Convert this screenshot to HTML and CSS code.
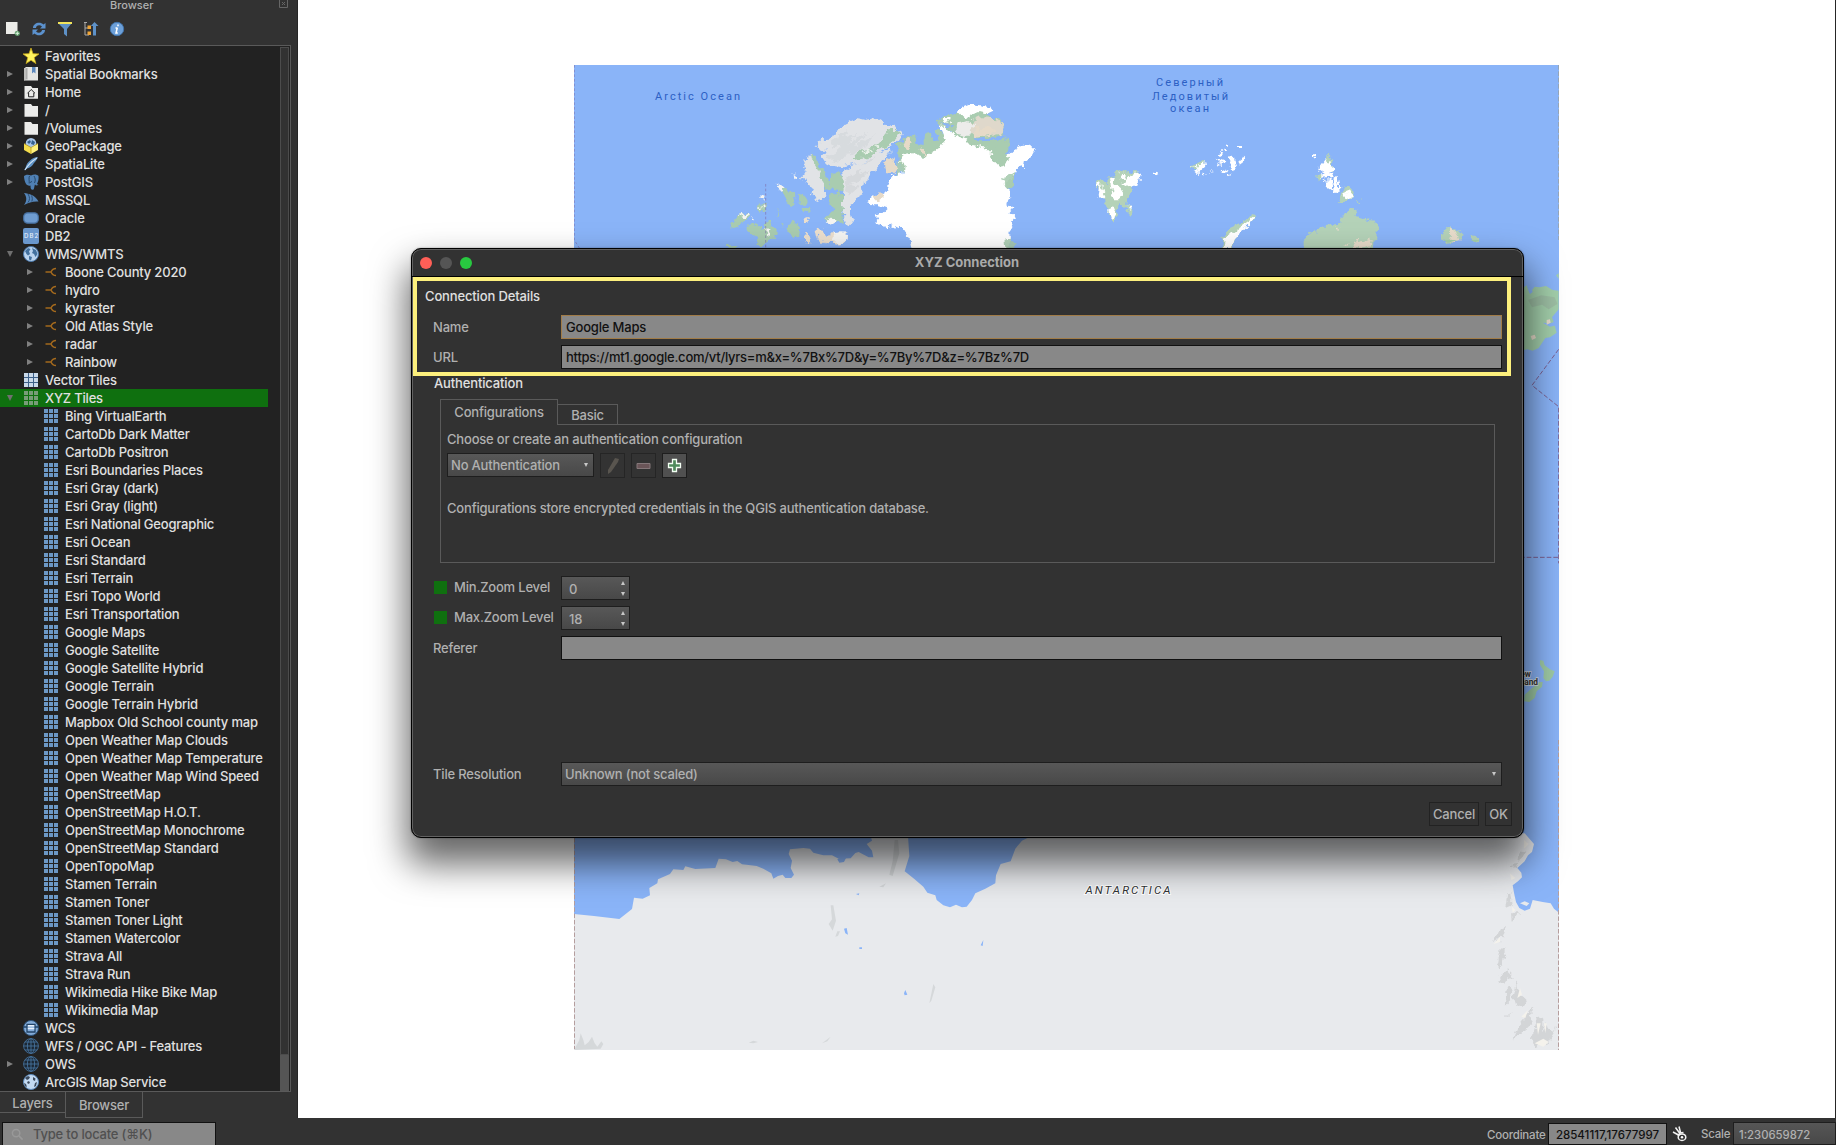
FILE: index.html
```html
<!DOCTYPE html>
<html lang="en">
<head>
<meta charset="utf-8">
<title>XYZ Connection</title>
<link rel="stylesheet" href="styles.css">
</head>
<body>
<svg class="defs" width="0" height="0" aria-hidden="true">
  <filter id="coast" x="0" y="0" width="1" height="1" color-interpolation-filters="sRGB"><feTurbulence type="fractalNoise" baseFrequency=".05" numOctaves="3" seed="4"/><feDisplacementMap in="SourceGraphic" scale="26" xChannelSelector="R" yChannelSelector="G"/></filter>
  <symbol id="star" viewBox="0 0 16 16"><path d="M8 0l2 5.7 6 .2-4.800 3.700 1.700 6L8 12.200 3.100 15.600l1.700-6L0 5.900l6-.2z" fill="#fff45e" stroke="#c9a91b" stroke-width=".8"/></symbol>
  <symbol id="book" viewBox="0 0 16 16"><path d="M1 2.500 3 1h12v13.500H1z" fill="#e4e4e2"/><path d="M1 2.500 4 2v11l-3 1.500z" fill="#bdbdbb"/><path d="M4 2v11.500" stroke="#888" stroke-width=".6"/><path d="M9 1h3.500v6.500L10.700 6 9 7.500z" fill="#5d88bd"/></symbol>
  <symbol id="folder" viewBox="0 0 16 16"><path d="M1.500 2H8l1.500 2H15v10.800H1.500z" fill="#ececea"/></symbol>
  <symbol id="home" viewBox="0 0 16 16"><path d="M1.500 2H8l1.500 2H15v10.800H1.500z" fill="#ececea"/><path d="M4.500 9.300 8.200 5.500 12 9.300M5.600 8.800v4h5.200v-4" fill="none" stroke="#222" stroke-width="1"/></symbol>
  <symbol id="gpkg" viewBox="0 0 16 16"><circle cx="8" cy="5.300" r="5.300" fill="#a9c6e8"/><path d="M4 4l3-2 1 2-2 2zM9 2l3 2-1 3-3-1z" fill="#35608f"/><path d="M1 5.500l7 4V16l-7-4z" fill="#f4dd4c"/><path d="M15 5.500 8 9.500V16l7-4z" fill="#fff07a"/><path d="M1 5.500l7 4 7-4M8 9.500V16" fill="none" stroke="#a98d1a" stroke-width=".7"/></symbol>
  <symbol id="feather" viewBox="0 0 16 16"><path d="M15 1C9 1.500 4 6 2.600 11.500L1 14.500l3-2C9 11.500 10 8 11 7c2-2 3-4 4-6z" fill="#5f93c6"/><path d="M14 2C9 5 5 9 2 14" stroke="#cfe2f3" fill="none" stroke-width="1.100"/></symbol>
  <symbol id="pg" viewBox="0 0 16 16"><path d="M1 2c3-2 5-1 7-.5C11 0 14 .5 15.500 2c.5 3-.5 6-1.500 8l1.500 1-2.500.5-1-1c-1 2-.5 5-2 5.300-2 .2-2.500-1-2.500-4.300-1 .5-2 .3-2.300-.3C3 12 1 6 1 2z" fill="#4f80b4"/><path d="M6.500 2c-1 2 0 5-.3 7.500M11 2c1 2 2 4 .5 7M7 8c1 1 1.500 0 1.500-1" fill="none" stroke="#23415f" stroke-width=".9"/></symbol>
  <symbol id="mssql" viewBox="0 0 16 16"><path d="M1 1c5 .5 11 2 14.500 8.500C10 9 6 10.500 1 13 4 9 4 5 1 1z" fill="#5585b8"/><path d="M5 2c2 3 2 6 0 8.500M8.500 3.500c1 2 1 4 .3 6" stroke="#2a4d73" fill="none"/></symbol>
  <symbol id="oracle" viewBox="0 0 16 16"><rect x=".7" y="2.800" width="14.600" height="10.400" rx="4" fill="#6f9cd0" stroke="#466f9f" stroke-width="1.200"/></symbol>
  <symbol id="globe" viewBox="0 0 16 16"><circle cx="8" cy="8" r="7.500" fill="#b9d3ef" stroke="#4b78ab"/><path d="M2 5l3-3 2.500 1L6 5.500 7 8l-2 1.500L3.500 8zM9 2l4 2 1.500 4-2 3-1.500-3-2-1 1-2zM6 10l3 1-1 3.500-2-1z" fill="#43719f"/></symbol>
  <symbol id="arc" viewBox="0 0 16 16"><circle cx="8" cy="8" r="7.500" fill="#c3daf2" stroke="#5d8abb"/><path d="M2 4l3-2 2 1-1 2-2 1zM10 3l2.500 1.500L12 7l-2-1zM5 7l2 1-1 2-2-1zM1 9l2 1 1 3-2-1zM12 9l2-1-1 4-2 1z" fill="#3c4a5c"/></symbol>
  <symbol id="wcs" viewBox="0 0 16 16"><circle cx="8" cy="8" r="7.500" fill="#83abd8" stroke="#2d5279"/><path d="M0 7h4V4.500h8V7h4M4 7v5h8V7" fill="none" stroke="#234468" stroke-width="1.300"/><path d="M4.800 5.700h6.500M4.800 8.500h6.500" stroke="#e6f0fb" stroke-width="1.500"/></symbol>
  <symbol id="wire" viewBox="0 0 16 16"><g fill="none" stroke="#4a78a6" stroke-width=".8"><circle cx="8" cy="8" r="7.400" fill="#1c2835"/><ellipse cx="8" cy="8" rx="3.600" ry="7.400"/><path d="M.6 8h14.800M8 .6v14.800M2 4h12M2 12h12"/></g></symbol>
  <symbol id="conn" viewBox="0 0 16 16"><path d="M2.500 8H8m5-3.600c-3 0-4.200 1.600-5 3.600.8 2 2 3.600 5 3.600" fill="none" stroke="#a3691d" stroke-width="1.500"/></symbol>
  <symbol id="grid" viewBox="0 0 16 16"><path d="M1 1h4v4H1zm5 0h4v4H6zm5 0h4v4h-4zM1 6h4v4H1zm5 0h4v4H6zm5 0h4v4h-4zM1 11h4v4H1zm5 0h4v4H6zm5 0h4v4h-4z" fill="currentColor"/></symbol>
</svg>

<div class="app">
<div class="workspace">
<aside class="dock">
  <header class="dock-title">Browser<svg class="float" viewBox="0 0 9 9"><path d="M.5.500h8v8h-8zM3 3l3 3M6 3 3 6" fill="none" stroke="#666"/></svg></header>
  <div class="tools">
    <svg viewBox="0 0 16 16"><path d="M1 1h11.500v12H1z" fill="#ecece8"/><circle cx="12.300" cy="12.300" r="2.600" fill="#5f9a6a"/><path d="M12.300 10.500v3.600M10.500 12.300h3.600" stroke="#d9f2dd"/></svg>
    <svg viewBox="0 0 16 16"><path d="M2 7c0-5 7-7 10.500-3.500L14.500 2v5.500H9l2-2C8 3 5 5 5 7zM14 9c0 5-7 7-10.500 3.500L1.500 14V8.500H7l-2 2C8 13 11 11 11 9z" fill="#5b91cd"/></svg>
    <svg viewBox="0 0 16 16"><path d="M1.500 2.500h13L10 8v7.500L7 13V8z" fill="#5e91c7"/><path d="M1 1h14v2H1z" fill="#f2e45c"/></svg>
    <svg viewBox="0 0 16 16"><path d="M1 1.500h3M2 2v12h4M2 7h4" stroke="#aaa" fill="none"/><path d="M4.500 4.500H8V8H4.500zm0 6H8V14H4.500z" fill="#f0a638"/><path d="M11.500 1l4 4h-2.500v9.500h-3V5H7.800z" fill="#5e91c7"/></svg>
    <svg viewBox="0 0 16 16"><circle cx="8" cy="8" r="6.700" fill="#6c9fd8" stroke="#4174ac"/><path d="M9 3.500v1.800M8.300 6.800 7 12h1.800M6.500 7h2" stroke="#fff" stroke-width="1.500" fill="none"/></svg>
  </div>
  <div class="tree-frame">
  <ul class="tree">
    <li><i></i><svg><use href="#star"/></svg>Favorites</li>
    <li><i class="r"></i><svg><use href="#book"/></svg>Spatial Bookmarks</li>
    <li><i class="r"></i><svg><use href="#home"/></svg>Home</li>
    <li><i class="r"></i><svg><use href="#folder"/></svg>/</li>
    <li><i class="r"></i><svg><use href="#folder"/></svg>/Volumes</li>
    <li><i class="r"></i><svg><use href="#gpkg"/></svg>GeoPackage</li>
    <li><i class="r"></i><svg><use href="#feather"/></svg>SpatiaLite</li>
    <li><i class="r"></i><svg><use href="#pg"/></svg>PostGIS</li>
    <li><i></i><svg><use href="#mssql"/></svg>MSSQL</li>
    <li><i></i><svg><use href="#oracle"/></svg>Oracle</li>
    <li><i></i><svg viewBox="0 0 16 16"><rect width="16" height="16" rx="2" fill="#6a97cd"/><text x="8" y="10" text-anchor="middle" font-size="6" fill="#e8f0fa" textLength="14">DB2</text></svg>DB2</li>
    <li><i class="d"></i><svg><use href="#globe"/></svg>WMS/WMTS</li>
    <li class="sub"><i class="r"></i><svg><use href="#conn"/></svg>Boone County 2020</li>
    <li class="sub"><i class="r"></i><svg><use href="#conn"/></svg>hydro</li>
    <li class="sub"><i class="r"></i><svg><use href="#conn"/></svg>kyraster</li>
    <li class="sub"><i class="r"></i><svg><use href="#conn"/></svg>Old Atlas Style</li>
    <li class="sub"><i class="r"></i><svg><use href="#conn"/></svg>radar</li>
    <li class="sub"><i class="r"></i><svg><use href="#conn"/></svg>Rainbow</li>
    <li class="vector"><i></i><svg><use href="#grid"/></svg>Vector Tiles</li>
    <li class="selected"><i class="d"></i><svg><use href="#grid"/></svg>XYZ Tiles</li>
    <li class="sub"><i></i><svg><use href="#grid"/></svg>Bing VirtualEarth</li>
    <li class="sub"><i></i><svg><use href="#grid"/></svg>CartoDb Dark Matter</li>
    <li class="sub"><i></i><svg><use href="#grid"/></svg>CartoDb Positron</li>
    <li class="sub"><i></i><svg><use href="#grid"/></svg>Esri Boundaries Places</li>
    <li class="sub"><i></i><svg><use href="#grid"/></svg>Esri Gray (dark)</li>
    <li class="sub"><i></i><svg><use href="#grid"/></svg>Esri Gray (light)</li>
    <li class="sub"><i></i><svg><use href="#grid"/></svg>Esri National Geographic</li>
    <li class="sub"><i></i><svg><use href="#grid"/></svg>Esri Ocean</li>
    <li class="sub"><i></i><svg><use href="#grid"/></svg>Esri Standard</li>
    <li class="sub"><i></i><svg><use href="#grid"/></svg>Esri Terrain</li>
    <li class="sub"><i></i><svg><use href="#grid"/></svg>Esri Topo World</li>
    <li class="sub"><i></i><svg><use href="#grid"/></svg>Esri Transportation</li>
    <li class="sub"><i></i><svg><use href="#grid"/></svg>Google Maps</li>
    <li class="sub"><i></i><svg><use href="#grid"/></svg>Google Satellite</li>
    <li class="sub"><i></i><svg><use href="#grid"/></svg>Google Satellite Hybrid</li>
    <li class="sub"><i></i><svg><use href="#grid"/></svg>Google Terrain</li>
    <li class="sub"><i></i><svg><use href="#grid"/></svg>Google Terrain Hybrid</li>
    <li class="sub"><i></i><svg><use href="#grid"/></svg>Mapbox Old School county map</li>
    <li class="sub"><i></i><svg><use href="#grid"/></svg>Open Weather Map Clouds</li>
    <li class="sub"><i></i><svg><use href="#grid"/></svg>Open Weather Map Temperature</li>
    <li class="sub"><i></i><svg><use href="#grid"/></svg>Open Weather Map Wind Speed</li>
    <li class="sub"><i></i><svg><use href="#grid"/></svg>OpenStreetMap</li>
    <li class="sub"><i></i><svg><use href="#grid"/></svg>OpenStreetMap H.O.T.</li>
    <li class="sub"><i></i><svg><use href="#grid"/></svg>OpenStreetMap Monochrome</li>
    <li class="sub"><i></i><svg><use href="#grid"/></svg>OpenStreetMap Standard</li>
    <li class="sub"><i></i><svg><use href="#grid"/></svg>OpenTopoMap</li>
    <li class="sub"><i></i><svg><use href="#grid"/></svg>Stamen Terrain</li>
    <li class="sub"><i></i><svg><use href="#grid"/></svg>Stamen Toner</li>
    <li class="sub"><i></i><svg><use href="#grid"/></svg>Stamen Toner Light</li>
    <li class="sub"><i></i><svg><use href="#grid"/></svg>Stamen Watercolor</li>
    <li class="sub"><i></i><svg><use href="#grid"/></svg>Strava All</li>
    <li class="sub"><i></i><svg><use href="#grid"/></svg>Strava Run</li>
    <li class="sub"><i></i><svg><use href="#grid"/></svg>Wikimedia Hike Bike Map</li>
    <li class="sub"><i></i><svg><use href="#grid"/></svg>Wikimedia Map</li>
    <li><i></i><svg><use href="#wcs"/></svg>WCS</li>
    <li><i></i><svg><use href="#wire"/></svg>WFS / OGC API - Features</li>
    <li><i class="r"></i><svg><use href="#wire"/></svg>OWS</li>
    <li><i></i><svg><use href="#arc"/></svg>ArcGIS Map Service</li>
  </ul>
  <div class="scrollbar"><div class="thumb"></div></div>
  </div>
  <nav class="dock-tabs"><span class="layers">Layers</span><span class="browser">Browser</span></nav>
</aside>

<main class="canvas">
<svg class="map" viewBox="574 65 985 985" width="985" height="985">
  <rect x="574" y="65" width="985" height="985" fill="#8ab4f8"/>
  <!-- Greenland and the Canadian arctic -->
  <g transform="translate(570 60) scale(.33333)">
    <g filter="url(#coast)">
    <path fill="#e1e3e6" d="M736 258l20-20 22-2 8-14 20-6 10-18 14-2 8-14 20-8 14 2 16 4 30-6 16 8 10 12 20 2 16 12 18 12-14 22-30 20-40 26-40 22-26 6-28 6-30-4-24-12-10-14 16-16-20-8z"/>
    <path fill="#cdd0d4" d="M800 230l30-20-8 24 40-16-30 34 60-34-40 44 66-44-50 56-36 8-34 20-8-20 30-28-40 10zM770 290l30-14 10 20-20 10z" opacity=".45"/>
    <path fill="#a9ccb0" d="M845 300l20-26 40-10 26-24 20-14 10-18 20-2 8 16-14 18-26 20-34 14-20 20-30 4z"/>
    <path fill="#e8f0e8" d="M880 274l24-8-4 10-18 6zM914 258l18-8-6 12z"/>
    <path fill="#e1e3e6" d="M720 284l16 18 8 20 12 20 6 30 0 30-6 20-14 4-10-20-10-8 4-16-18-10-12-24 14-6-12-18 10-8-8-16 16-6z"/>
    <path fill="#a9ccb0" d="M722 280l16 14 8 26 20 14 6 24 16 20-6 14-16-6-12-34-14-28-14-24zM784 338l24-2 16 20 2 30-12 10-24-2-8-20zM776 404l30-6 14 10-2 60 0 20-28 0-22-12 14-18 8-16-14-14z"/>
    <path fill="#e1e3e6" d="M816 332l40-18 30-10 30-20 46-16-8 20-20 18-6 16-26 14-4 18-22 18-4 10 4 20-18 10-4 20-14 8 0 26 12 10-6 10-8 10-14-4 -2-30-4-20 6-60z"/>
    <path fill="#caccd0" d="M836 350l40-24-10 20 36-22-36 38-26 14 30 4-36 28-4-14zM880 310l36-18-10 18z" opacity=".45"/>
    <path fill="#a9ccb0" d="M636 388l20-4 16 20 4 20-12 14-14-8-8-22zM684 402l16 2 10 18-12 16-12-12zM566 434l18-6 4 20-16 10-8-10zM484 494l20-26 28-12 12 12-20 18-20 14-20 6zM532 496l14-6 20 10 20 6 4-26 10 0 6 24 18 10-6 20-26 6-18 16-20-6 14-12-20-12-14-14zM654 492l22-6 14 14-2 24-16 8-8-10-12-4zM470 564l8-8 20 0 14 8zM622 444l8 20-4 4zM700 444l18 0 4 10-18 2zM634 488l8 4-4 8z"/>
    <path fill="#f4f4f2" d="M624 378l12-2 8 8-8 8-10-4zM564 414l10-10 16 4-4 10-18 2zM562 440l20-4-4 10zM508 466l26-8 8 6-14 10zM668 340l8 2 2 12-8 4zM590 500l8 8 0 14-10 8zM546 472l10 4-4 6z"/>
    <path fill="#ecdfcd" d="M702 528l14-4 6 16-8 8-12-4zM734 508l24 4 12 12 24-2 14-8 22 4 4 16-10 16-20 4-16-4-20 4-12-14-16-2zM700 472l14 0 6 18-12 6z"/>
    <path fill="#f4f4f2" d="M790 516l30-2 14 8-2 20-16 10-26-6 6-16zM770 482l20-12 10 12-14 10z"/>
    <path fill="#a9ccb0" d="M984 250L1020 228 1034 226 1040 250 1064 252 1064 218 1078 214 1090 246 1104 246 1094 208 1108 206 1130 232 1144 218 1110 198 1096 184 1126 168 1160 160 1195 135 1240 140 1266 150 1250 165 1285 175 1304 205 1296 226 1316 238 1312 280 1330 290 1332 380 1290 400 1200 300 1100 290 1004 345 985 290z"/>
    <path fill="#8ab4f8" d="M1042 226l20 22-4-34zM1080 214l14 24-2-30zM1214 232l60 0 20-6 14 8-30 8-60 2zM1110 190l40 6-20 6z"/>
    <path fill="#fff" d="M1160 152l20-12 20-8 26 4 34 6 10 10-16 8-30-4-24 10-20 8-14-14zM1118 174l18 0 4 12-14 6z"/>
    <path fill="#dfd8cb" d="M1204 186l30-14 40 2 20 14 10 18-10 16-40 4-34 4-20-16z"/>
    <path fill="#ececea" d="M1164 190l30-10 20 10-10 30-16 8-34-10z"/>
    <path fill="#fff" d="M1000 284L1030 280 1060 290 1090 276 1110 262 1128 240 1112 200 1126 200 1150 228 1165 232 1185 232 1200 250 1220 262 1240 258 1262 280 1270 300 1290 320 1310 316 1318 296 1310 290 1330 270 1345 262 1355 254 1380 254 1396 270 1385 290 1368 304 1365 320 1340 324 1335 336 1320 345 1328 352 1310 366 1316 382 1320 400 1312 430 1330 445 1318 460 1336 470 1325 484 1330 500 1315 520 1328 540 1310 575 1028 575 1022 540 1010 515 990 506 970 496 945 502 925 492 920 476 908 464 935 458 950 444 925 436 905 436 892 424 905 412 935 405 955 392 955 370 965 345 1000 342 1004 315 990 300z"/>
    <path fill="#e6dac8" d="M1000 246l14-12 12 10-8 18-14 4zM1048 268l18 4 10 14-24-8zM906 412l28-12 8 6-22 18zM942 312l14-18 22 10 8 26-14 10-26-4zM1212 196l20 4-6 18 30-20 20 12-14 14-46 4z"/>
    <path fill="#a9ccb0" d="M986 300l14 28-6 18-14-4zM1264 286l20-30 24-14 8 24-20 40-14 4zM1296 350l24-6 12 20-6 24-14 0zM1304 540l20-10 10 20-4 14-24 0z" opacity=".9"/>
    </g>
    <path d="M587 372v190M13 15v525l15 24" fill="none" stroke="#7d6aa5" stroke-width="2.500" stroke-dasharray="8 6" opacity=".7"/>
  </g>
  <!-- Svalbard, Franz Josef Land and the Siberian coast -->
  <g transform="translate(1060 60) scale(.33333)">
    <g filter="url(#coast)">
    <path fill="#b4d2b8" d="M108 364l12-8 16 14 12-18 14-4 10-12 16-4 18 6 22-2 10 4-20 30-14 40-6 20 16 14 0 20-10-4-8-16-20-16-4 30-10 26-8-2-10-20 6-14-18-14 8-12-14-14-6-18zM392 318l20-14 20 2-10 30-16-6zM796 296l10-12 14 22-4 30-30 0zM768 346l20 2 0 12-14 2zM836 430l12-34 6-18 26 16 2 14-20 16zM890 420l14 6-10 6zM728 540l16-16 50-26 36-6 22-20 14-24 12-4 12 12-4 14 24 6 16 4 18 2 10 20-2 30-12 14 0 30-212 0zM1146 520l10-16 24 6 14 4 14 10-6 12-20 8-24 6-12-12zM1222 526l20 2 14 10-4 8-20-4zM480 575l8-40 20-30 30-14 40-26 6 4-4 14-40 30-30 50z"/>
    <path fill="#fff" d="M110 366l8 2 4 12 8 8 6 24-8 8-12-14 4-24-10-8zM150 354l12-2 2 16 18 16 10 16-16 18-14 0-6-20zM176 342l16-4 6 18-18 2zM190 370l20-24 22-8 12 8-8 20-24 16zM144 452l20-14 4 8-10 36-8-4zM202 438l14-2 0 12-8 4zM278 336l12-4 4 6-12 6zM392 318l24-6-6 8zM404 338l18-26 18-2-20 28zM464 292l32 12-8 8zM474 308l16 4-10 6zM494 252h12v6h-12zM486 270l10-4 2 8-8 2zM476 284l8-8 6 6-10 6zM534 258h10v6h-10zM514 292l8-2 4 20 4 12-14 6-10-8 4-12zM536 304l18-14 2 14-16 12zM480 334l18-10 4 8-16 10zM450 334l8-4 2 8zM430 344l8-2 2 8zM504 344h8v6h-8zM762 286h9v9h-9zM780 318l14-20 20 4 6 30-24 10-18-12zM784 342l36-4 4 14-40 4zM796 362l20-4 4 30-14 4-12-16zM824 354l12-6 6 46-20 6zM850 400l16-6 16 16-14 4-10 4zM484 575l8-39 40-28 44-32 4 6-40 36-40 52z"/>
    <path fill="#e8dccb" d="M1170 540l6-34 10 10 16 24-20 6zM880 550l20-10 20 4 16-6-4 16-20 8-30 0zM846 550l20 2-4 6zM826 500l12 6-6 6z"/>
    </g>
    <path d="M1496 15v525" stroke="#97a3ad" stroke-width="3" stroke-dasharray="14 5"/>
  </g>
  <!-- Far east coast and the date line -->
  <g transform="translate(1380 240) scale(.33333)">
    <path fill="#a3cfab" d="M420 150l20-14 8 24 16-20 14 2 20-4 20 12 18 2v56l-20 24 6 16 8 30-20 14-14 2-20 30-18 8-16-4-22 4zM528 106l8-6v16zM190 0l14 8 30-8zM272 0l14 6 14-6z"/>
    <path fill="#9dbfa4" d="M444 180l40-14 40 6 8 20-26 16-20-14-30 8z"/>
    <path fill="#8ab4f8" d="M442 138l10-2 6 20-8 6zM488 248l24 2 24-10v14l-26 6z"/>
    <path fill="#e8dccb" d="M500 240l10-2 2 10-12 6zM452 288l12-4 4 10-12 6z"/>
    <path d="M536 328l-80 108 80 64v470M420 952h114" fill="none" stroke="#7b6090" stroke-width="3" stroke-dasharray="14 6"/>
  </g>
  <!-- New Zealand -->
  <g transform="translate(1510 640) scale(.33333)">
    <path fill="#9fcba6" d="M90 60l10 2 4 14 16 12 14 6-6 16-10 12-10 2-8-10 2-20-12-20zM88 126l10 0-2 14-16 14-6 20-16 12-16-2 2-20 20-18z"/>
    <g font-family="Roboto, sans-serif" font-weight="700" font-size="25" text-anchor="end" fill="#333" stroke="#dce6ee" stroke-width="4" paint-order="stroke"><text x="63" y="111">New</text><text x="84" y="136">Zealand</text></g>
  </g>
  <!-- Antarctica -->
  <g transform="translate(560 820) scale(.33333)">
    <path fill="#e8eaed" d="M42 282l60 6 76 9 20-16 18-14 6-34 26 3 22-10-2-22 24-14 2-12 36-16 10-14 30 2 6-11 30 8 60-3 10-28 22 2 20 8 14-3 14 10 20 2 24 3 20 8 24 14 6 16 14-8 14-4 8 10 18 0 8-10-10-20 4-22-10-20 4-14 40-4 20 2 10 12 30 8 26 0 20 10 36-1 14-16 10-3 30 16 14 0-4-20-16-20 16-10-4-14 112 0 4 60-14 46 30 24 26 22 12 18 24 8 4 14 20 16 20 6 18-8 18 8 14-2 16-20 10-20 30-14 30-16 2-24 14-34 30-8 14-38 20-24 40-20H2840V690H42z"/>
    <path fill="#8ab4f8" d="M832 118l16-8 6-10 6 10-8 16-14 2zM852 326l8-2 4 20-8-4zM1262 376l8-16-2 18zM1032 520l4-10 6 14-8 2zM888 222l10-2-2 6zM898 382h8v5h-8z"/>
    <g fill="#d5d8da"><path d="M812 256l8 0 8 46-10 30-12-20 10-14zM832 334l8 0-6 14-8 2zM1004 60l10 0 4 40-20 68-10-4 10-40zM958 200l20-10-8 12zM1120 492l6 10-12 40-6 8zM786 670l26-20-10 14zM566 668l14-6 14 4-14 4zM42 690l16-30 4-20 8 20 4 16 12-10 10-16 8 20 8 10 12-16 6 8-8 14z"/></g>
  </g>
  <g transform="translate(1360 740) scale(.33333)">
    <path fill="#e8eaed" d="M390 280H494L522 312 516 336 504 346 494 364 472 384 484 398 486 412 474 424 458 436 462 458 468 486 478 504 494 512 510 506 518 480 548 486 572 490 582 506 597 518V930H390z"/>
    <path fill="#e8eaed" d="M480 490l14-6 14 6-8 8z"/>
    <g fill="#d3d5d7" filter="url(#coast)"><path d="M476 342l20-14-4 20-20 16zM458 374l16-2-8 18zM442 460l12-2 4 36-22 10zM450 520l30 0-14 20-14 2zM410 590l10-24 18-8-10 30-20 16-14 12zM416 640l20-20-6 40-14 30-6-14zM426 700l12-12 24 24-24 12-20 6zM440 744l14-4 0 40-20 20zM470 730l8 30 22 20-10 14-24 0-6-20zM434 830l22-14-14 14zM458 900l16-40 26-30 20-30-4 30-10 30-24 20zM520 880l14-54 16 16 0 40-20 40-14-16zM540 900l20-50 16 24 14-10-30 50z"/></g>
    <g fill="#f4f2ec"><path d="M492 300l14 12-14 14zM450 400l16 14-12 6zM456 500l10 10-8 8zM400 612l20-20 0 14zM480 744l6 20-14 10zM484 830l20-20-8 24zM530 850l12 0-8 34zM552 850l8 0-4 30zM524 910l26-14 16 10-16 14z"/></g>
  </g>
  <path d="M574.500 838v211M1558.500 740v310" stroke="#b59e9e" stroke-width="1" stroke-dasharray="4.500 1.800"/>
  <g class="sea" text-anchor="middle">
    <text x="697.500" y="100.300" textLength="85">Arctic Ocean</text>
    <text x="1189.500" y="86" textLength="67">Северный</text>
    <text x="1190" y="100" textLength="76">Ледовитый</text>
    <text x="1189.500" y="112.200" textLength="39">океан</text>
  </g>
  <text class="land" x="1128" y="894.300" text-anchor="middle" textLength="85">ANTARCTICA</text>
</svg>
</main>
</div>

<footer class="status">
  <div class="locator"><svg viewBox="0 0 14 14"><circle cx="5.500" cy="5.500" r="4" fill="none" stroke="#999" stroke-width="1.600"/><path d="M8.500 8.500l4 4" stroke="#999" stroke-width="1.800"/></svg>Type to locate (⌘K)</div>
  <span class="coord-label">Coordinate</span>
  <div class="coord">28541117,17677997</div>
  <svg class="mouse" viewBox="0 0 16 16"><g fill="none" stroke="#f2f2f2" stroke-width="1.500"><path d="M3.500 1.500l4 5.500M7 .5l1.500 6M1 6l5.500 3M6 10l2-3 3.500-.5"/><ellipse cx="10" cy="11.200" rx="3.800" ry="3.300"/></g><circle cx="10" cy="11.200" r="1.200" fill="#fff"/></svg>
  <span class="scale-label">Scale</span>
  <div class="scale">1:230659872</div>
</footer>
</div>

<section class="dialog">
  <header class="titlebar"><b class="close"></b><b class="min"></b><b class="max"></b><h1>XYZ Connection</h1></header>
  <div class="details">
    <h2>Connection Details</h2>
    <div class="row"><label>Name</label><div class="field focus">Google Maps</div></div>
    <div class="row"><label>URL</label><div class="field url">https://mt1.google.com/vt/lyrs=m&amp;x=%7Bx%7D&amp;y=%7By%7D&amp;z=%7Bz%7D</div></div>
  </div>
  <h3>Authentication</h3>
  <nav class="auth-tabs"><span class="on">Configurations</span><span class="off">Basic</span><em></em></nav>
  <div class="pane">
    <p class="choose">Choose or create an authentication configuration</p>
    <div class="controls">
      <div class="combo">No Authentication<u></u></div>
      <div class="btn off"><svg viewBox="0 0 23 23"><path d="M14 4l4 1-1 3-7 10-3 2 0-4z" fill="#59554f"/></svg></div>
      <div class="btn off"><svg viewBox="0 0 23 23"><path d="M5 9.500h13v5H5z" fill="#6a5558" stroke="#85787a"/></svg></div>
      <div class="btn"><svg viewBox="0 0 23 23"><path d="M9.500 5.500h4v4h4v4h-4v4h-4v-4h-4v-4h4z" fill="#4f8a5c" stroke="#f4fff4" stroke-width="1.300"/></svg></div>
    </div>
    <p class="store">Configurations store encrypted credentials in the QGIS authentication database.</p>
  </div>
  <div class="row zoom"><label><s></s>Min.Zoom Level</label><div class="spin">0<q></q></div></div>
  <div class="row zoom"><label><s></s>Max.Zoom Level</label><div class="spin">18<q></q></div></div>
  <div class="row referer"><label>Referer</label><div class="field"></div></div>
  <div class="row tile"><label>Tile Resolution</label><div class="combo">Unknown (not scaled)<u></u></div></div>
  <div class="buttons"><button class="cancel">Cancel</button><button class="ok">OK</button></div>
</section>
</body>
</html>
```
FILE: styles.css
```css
* { box-sizing: border-box; }
body {
  margin: 0;
  width: 1836px;
  height: 1145px;
  overflow: hidden;
  position: relative;
  background: #323232;
  color: #b0b0b0;
  font: 500 13px/18px Inter, "Liberation Sans", sans-serif;
  letter-spacing: -.19px;
}
h1, h2, h3, p, ul { margin: 0; padding: 0; font-size: inherit; font-weight: 500; }
.defs { position: absolute; }

.app { display: flex; flex-direction: column; height: 1145px; }
.workspace { display: flex; height: 1118px; }

/* Browser dock */
.dock { width: 298px; display: flex; flex-direction: column; border-right: 1px solid #262626; }
.dock-title { height: 17px; line-height: 11px; padding-left: 110px; font-size: 11px; letter-spacing: 0; display: flex; justify-content: space-between; }
.float { width: 9px; height: 9px; margin: -1px 9px 0 0; }
.tools { height: 28px; display: flex; gap: 10px; padding: 4px 0 0 5px; }
.tools svg { width: 16px; height: 16px; }
.tree-frame { display: flex; width: 291px; height: 1048px; border: solid #5a5a5a; border-width: 1px 1px 1px 0; background: #222; padding-top: 1px; }
.tree { flex: 1; list-style: none; color: #e0e0e0; white-space: nowrap; }
.tree li { display: flex; align-items: center; height: 18px; line-height: 18px; width: 268px; padding-left: 6px; }
.tree li.sub { padding-left: 26px; }
.tree svg { width: 16px; height: 16px; margin-right: 6px; flex: none; color: #6c98c6; }
.tree li.vector svg { color: #c9d9ea; background: linear-gradient(#3d6088, #3d6088) center / 14px 14px no-repeat; }
.tree li.selected { background: #0f700f; }
.tree li.selected svg { color: #789c78; }
.tree i { width: 17px; flex: none; display: flex; }
.tree i::before { content: ""; }
.tree i.r::before { border: solid transparent; border-width: 3px 0 3px 6px; border-left-color: #808080; margin-left: 1px; }
.tree i.d::before { border: solid transparent; border-width: 6px 3px 0; border-top-color: #707070; margin-left: 1px; }
.scrollbar { width: 9px; margin-right: 1px; background: #555; }
.thumb { height: 1008px; background: #323232; border: 1px solid #4c4c4c; }
.dock-tabs { display: flex; align-items: flex-start; height: 26px; }
.dock-tabs span { border: 1px solid #5a5a5a; border-top: 0; text-align: center; }
.layers { width: 65px; height: 21px; border-width: 0 0 1px !important; line-height: 23px; }
.browser { width: 78px; height: 26px; line-height: 27px; }

/* Map canvas */
.canvas { flex: 1; background: #fff; padding: 65px 0 0 276px; border-right: 1px solid #262626; }
.map { display: block; letter-spacing: 0; }
.sea text { font: 400 11px Roboto, sans-serif; fill: #2c60c4; }
.land { font: italic 400 11.500px Roboto, sans-serif; fill: #303336; stroke: #fff; stroke-width: 2px; paint-order: stroke; }

/* Status bar */
.status { height: 27px; display: flex; align-items: flex-start; }
.locator { width: 214px; height: 23px; margin: 4px 0 0 2px; background: #888; border: 1px solid #111; border-bottom: 0; color: #505050; display: flex; align-items: center; gap: 9px; padding-left: 8px; line-height: 22px; }
.locator svg { width: 13px; height: 13px; }
.coord-label { width: 57px; margin-left: 1271px; line-height: 34px; font-size: 11.500px; letter-spacing: -.2px; white-space: nowrap; }
.coord { width: 119px; flex: none; height: 22px; margin: 5px 0 0 4px; background: #888; border: 1px solid #111; color: #111; line-height: 22px; text-align: center; font-size: 11.500px; letter-spacing: 0; white-space: nowrap; }
.mouse { width: 16px; height: 16px; margin: 8px 0 0 5px; }
.scale-label { width: 28px; margin-left: 13px; line-height: 32px; font-size: 11.500px; letter-spacing: -.2px; }
.scale { flex: 1; height: 23px; margin: 4px 0 0 4px; background: linear-gradient(#565656, #484848); border: 1px solid #1e1e1e; line-height: 24px; padding-left: 5px; font-size: 11.300px; letter-spacing: 0; }

/* XYZ connection window */
.dialog { position: absolute; left: 411px; top: 248px; width: 1113px; height: 590px; background: #323232; border: 1px solid #000; border-radius: 10px; box-shadow: inset 0 0 0 1px #616161, 0 0 2px rgba(0, 0, 0, .4), 0 22px 36px 4px rgba(0, 0, 0, .6); }
.titlebar { height: 28px; display: flex; align-items: center; gap: 8px; padding-left: 8px; border-bottom: 1px solid #000; }
.titlebar b { width: 12px; height: 12px; border-radius: 50%; background: #555; }
.titlebar .close { background: #ff5f57; }
.titlebar .max { background: #28c840; }
.titlebar h1 { margin-left: -69px; flex: 1; text-align: center; font-weight: 700; color: #aaa; line-height: 16px; padding-bottom: 1px; letter-spacing: 0; }
.details { width: 1098px; height: 99px; margin-left: 1px; border: 4px solid #fdf07d; padding: 6px 0 0 8px; }
.details h2 { color: #e0e0e0; height: 28px; letter-spacing: -.14px; }
.row { display: flex; align-items: center; height: 24px; }
.row label { width: 127px; display: flex; align-items: center; flex: none; white-space: nowrap; }
.details .row { padding-left: 8px; margin-bottom: 6px; }
.details .row label { width: 128px; }
.field { width: 941px; flex: none; height: 24px; background: #888; border: 1px solid #111; color: #111; line-height: 23px; padding-left: 4px; white-space: nowrap; }
.field.focus { border-color: #a17c48; }
.field.url { letter-spacing: -.25px; }
.dialog h3 { color: #e0e0e0; height: 23px; line-height: 16px; padding-left: 22px; margin-top: -1px; letter-spacing: -.14px; }
.auth-tabs { height: 27px; display: flex; align-items: flex-end; margin-left: 28px; width: 1055px; }
.auth-tabs span { border: 1px solid #5a5a5a; text-align: center; }
.auth-tabs .on { width: 118px; height: 26px; border-bottom: 0; line-height: 25px; }
.auth-tabs .off { width: 60px; height: 21px; border-left: 0; line-height: 21px; }
.auth-tabs em { flex: 1; border-bottom: 1px solid #5a5a5a; }
.pane { width: 1055px; height: 138px; margin-left: 28px; border: 1px solid #5a5a5a; border-top: 0; padding: 5px 0 0 6px; }
.controls { display: flex; gap: 6px; margin: 5px 0 21px; }
.combo { display: flex; align-items: center; justify-content: space-between; height: 24px; border: 1px solid #1e1e1e; background: linear-gradient(#585858, #484848); padding: 0 5px 0 3px; white-space: nowrap; }
.controls .combo { width: 147px; }
.combo u { border: solid transparent; border-width: 4px 2px 0; border-top-color: #c8c8c8; }
.btn { width: 25px; height: 25px; border: 1px solid #1e1e1e; background: #505050; }
.btn.off { background: #333; border-color: #252525; }
.btn svg { display: block; width: 23px; height: 23px; }
.zoom { margin: 13px 0 0 22px; }
.zoom + .zoom { margin-top: 6px; }
.zoom s { width: 13px; height: 13px; background: #0f700f; margin-right: 7px; }
.zoom label { height: 22px; margin-bottom: 2px; }
.spin { width: 69px; height: 24px; border: 1px solid #1e1e1e; background: linear-gradient(#585858, #484848); line-height: 25px; padding: 0 4px 0 7px; display: flex; justify-content: space-between; }
.spin q { quotes: none; width: 4px; height: 15px; margin-top: 4px; border: solid transparent; border-width: 4px 2px; display: flex; flex-direction: column; justify-content: space-between; }
.spin q::before, .spin q::after { content: ""; margin: -4px -2px; border: solid transparent; border-width: 0 2px 4px; border-bottom-color: #c8c8c8; }
.spin q::after { border-width: 4px 2px 0; border-bottom-color: transparent; border-top-color: #c8c8c8; }
.referer { margin: 6px 0 0 21px; }
.referer label, .tile label { width: 128px; }
.tile { margin: 102px 0 0 21px; }
.tile .combo { width: 941px; }
.buttons { display: flex; justify-content: flex-end; gap: 6px; margin: 16px 11px 0 0; }
.buttons button { height: 24px; border: 1px solid #222; background: #323232; color: #b0b0b0; font: inherit; letter-spacing: inherit; padding: 0; }
.cancel { width: 50px; }
.ok { width: 27px; }
```
